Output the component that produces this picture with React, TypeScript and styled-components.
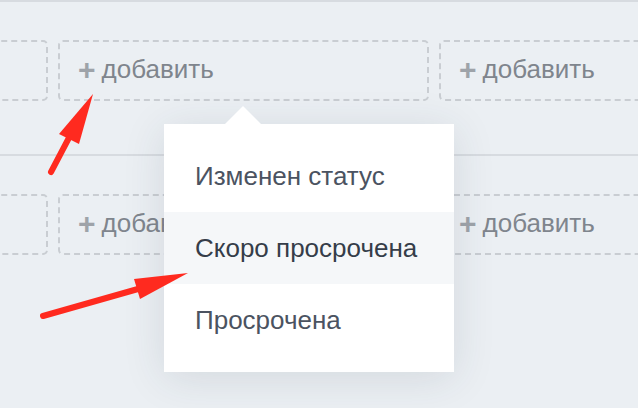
import React from 'react';
import styled, { createGlobalStyle } from 'styled-components';

const GlobalStyle = createGlobalStyle`
  html, body {
    margin: 0;
    padding: 0;
    background: #ebeff3;
    overflow: hidden;
  }
  body {
    font-family: "Liberation Sans", Arial, sans-serif;
  }
`;

const rows = [0, 1];
const cells = [0, 1, 2];
const menuItems = ['Изменен статус', 'Скоро просрочена', 'Просрочена'];

export default function App() {
  return (
    <Page>
      <GlobalStyle />
      {rows.map((r) => (
        <Row key={r} last={r === rows.length - 1}>
          {cells.map((c) => (
            <AddBox key={c}>
              {c > 0 && (
                <>
                  <Plus>+</Plus>
                  <AddText>добавить</AddText>
                </>
              )}
            </AddBox>
          ))}
        </Row>
      ))}

      <Menu>
        <Caret />
        {menuItems.map((item, i) => (
          <MenuItem key={item} active={i === 1}>
            {item}
          </MenuItem>
        ))}
      </Menu>

      <Arrows width="638" height="408" viewBox="0 0 638 408">
        <line x1="51" y1="170" x2="72" y2="130" stroke="#ff2a1f" strokeWidth="6" strokeLinecap="round" />
        <polygon points="93,92 59,132 79,142" fill="#ff2a1f" />
        <line x1="43" y1="314" x2="145" y2="285" stroke="#ff2a1f" strokeWidth="6" strokeLinecap="round" />
        <polygon points="188,271 134,277 140,297" fill="#ff2a1f" />
      </Arrows>
    </Page>
  );
}

const Page = styled.div`
  position: relative;
  width: 638px;
  height: 408px;
  overflow: hidden;
  border-top: 2px solid #d7dbe0;
  box-sizing: border-box;
`;

const Row = styled.div<{ last?: boolean }>`
  display: flex;
  gap: 10px;
  margin-left: -323px;
  padding: 38px 0 ${(p) => (p.last ? '0' : '53px')};
  border-bottom: ${(p) => (p.last ? 'none' : '2px solid #d7dbe0')};
`;

const AddBox = styled.div`
  flex: 0 0 371px;
  height: 61px;
  box-sizing: border-box;
  display: flex;
  align-items: center;
  gap: 6px;
  padding: 0 0 2px 18px;
  border: 2px dashed #c9cdd2;
  border-radius: 5px;
`;

const Plus = styled.span`
  font-size: 30px;
  font-weight: bold;
  color: #9ea3a9;
  line-height: 1;
`;

const AddText = styled.span`
  font-size: 26px;
  color: #7f858d;
`;

const Menu = styled.div`
  position: absolute;
  left: 164px;
  top: 122px;
  width: 290px;
  padding: 16px 0;
  background: #ffffff;
  box-shadow: 0 6px 40px rgba(40, 55, 75, 0.12);
`;

const Caret = styled.div`
  position: absolute;
  top: -18px;
  left: 61px;
  width: 0;
  height: 0;
  border-left: 18px solid transparent;
  border-right: 18px solid transparent;
  border-bottom: 18px solid #ffffff;
`;

const MenuItem = styled.div<{ active?: boolean }>`
  height: 72px;
  display: flex;
  align-items: center;
  padding-left: 31px;
  font-size: 26px;
  color: ${(p) => (p.active ? '#353d49' : '#4b5361')};
  background: ${(p) => (p.active ? '#f5f7f9' : 'transparent')};
`;

const Arrows = styled.svg`
  position: absolute;
  left: 0;
  top: 0;
  pointer-events: none;
`;
